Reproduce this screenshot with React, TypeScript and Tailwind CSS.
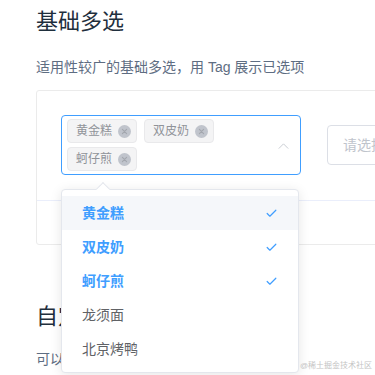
import { Check } from 'lucide-react'

const font = 'font-["Liberation_Sans","Noto_Sans_CJK_SC",sans-serif]'

const selected = ['黄金糕', '双皮奶', '蚵仔煎']
const options = [
  { label: '黄金糕', on: true, hover: true },
  { label: '双皮奶', on: true },
  { label: '蚵仔煎', on: true },
  { label: '龙须面' },
  { label: '北京烤鸭' },
]

function Tag({ label }: { label: string }) {
  return (
    <span className="flex h-[24px] items-center rounded-[4px] border border-[#e9e9eb] bg-[#f4f4f5] pl-2 pr-[5px] text-[12px] text-[#909399]">
      {label}
      <span className="ml-[6px] flex h-[13px] w-[13px] items-center justify-center rounded-full bg-[#c0c4cc]">
        <svg viewBox="0 0 10 10" className="h-[7px] w-[7px]" fill="none" stroke="#a3a7ae" strokeWidth="1.6" strokeLinecap="round">
          <path d="M2 2l6 6M8 2l-6 6" />
        </svg>
      </span>
    </span>
  )
}

export default function App() {
  return (
    <div className={`relative h-[375px] w-[375px] overflow-hidden bg-white ${font}`}>
      <div className="pl-9 pt-[5px]">
        <h3 className="text-[22px] leading-[33px] font-normal text-[#1f2f3d]">基础多选</h3>
        <p className="mt-[19px] text-[14px] leading-[21px] text-[#5e6d82]">适用性较广的基础多选，用 Tag 展示已选项</p>
      </div>

      <div className="ml-9 mt-[12px] w-[600px] rounded-[3px] border border-[#ebebeb]">
        <div className="flex items-center gap-[26px] px-6 pt-[24px] pb-[25px]">
          <div className="relative h-[60px] w-[240px] shrink-0 rounded-[4px] border border-[#409eff]">
            <div className="flex w-[215px] flex-wrap gap-x-[7px] gap-y-[4px] pl-[5px] pt-[3px]">
              {selected.map((s) => (
                <Tag key={s} label={s} />
              ))}
            </div>
            <svg viewBox="0 0 12 7" className="absolute right-[11px] top-[27px] h-[6px] w-[11px]" fill="none" stroke="#c0c4cc" strokeWidth="1">
              <path d="M0.5 6.5L6 1l5.5 5.5" />
            </svg>
          </div>
          <div className="flex h-[40px] w-[240px] shrink-0 items-center rounded-[4px] border border-[#dcdfe6] pl-[15px] text-[14px] text-[#c0c4cc]">
            请选择
          </div>
        </div>
        <div className="h-[44px] border-t border-[#eaeefb]" />
      </div>

      <div className="pl-9">
        <h3 className="mt-[55px] text-[22px] leading-[33px] font-normal text-[#1f2f3d]">自定义模板</h3>
        <p className="mt-[16px] text-[14px] leading-[21px] text-[#5e6d82]">可以自定义备选项</p>
      </div>

      <div className="absolute left-[61px] top-[189px] w-[238px] rounded-[4px] border border-[#e4e7ed] bg-white py-[6px] shadow-[0_2px_12px_0_rgba(0,0,0,0.1)]">
        <div className="absolute -top-[6px] left-[36px] h-[10px] w-[10px] rotate-45 border-l border-t border-[#e4e7ed] bg-white" />
        {options.map((o) => (
          <div
            key={o.label}
            className={`relative flex h-[34px] items-center justify-between px-5 text-[14px] ${o.hover ? 'bg-[#f5f7fa]' : ''} ${o.on ? 'font-bold text-[#409eff]' : 'text-[#606266]'}`}
          >
            {o.label}
            {o.on && <Check size={13} strokeWidth={2.2} className="text-[#409eff]" />}
          </div>
        ))}
      </div>

      <span className="absolute right-[3px] bottom-[4px] text-[8px] leading-[10px] text-[#c4c4c4]">@稀土掘金技术社区</span>
    </div>
  )
}
